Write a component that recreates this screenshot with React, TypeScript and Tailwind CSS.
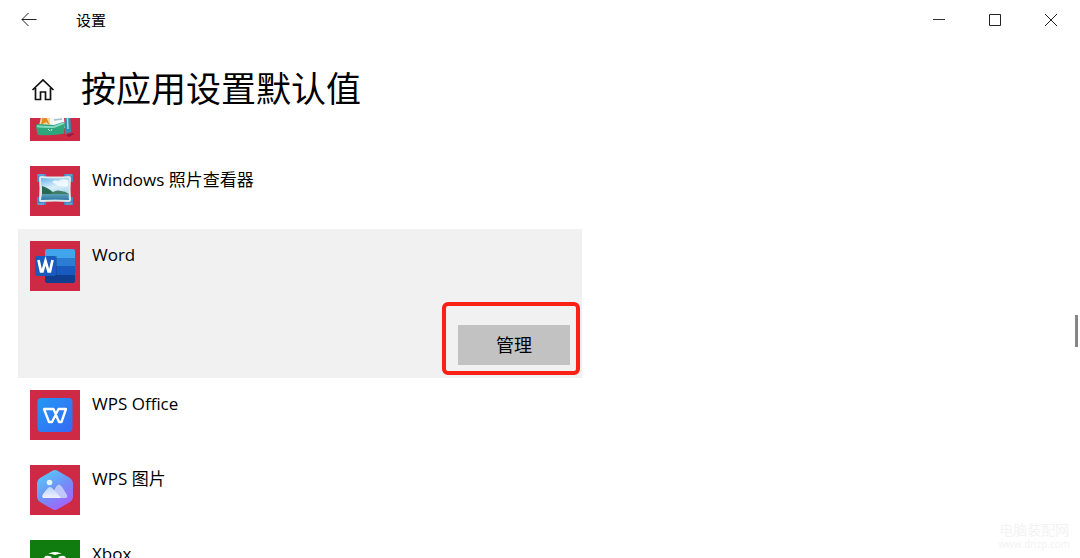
const apps = [
  { name: "", icon: <FaxIcon />, tile: "bg-[#cf2a45]", selected: false },
  { name: "Windows 照片查看器", icon: <PhotoViewerIcon />, tile: "bg-[#cf2a45]", selected: false },
  { name: "Word", icon: <WordIcon />, tile: "bg-[#cf2a45]", selected: true },
  { name: "WPS Office", icon: <WpsIcon />, tile: "bg-[#cf2a45]", selected: false },
  { name: "WPS 图片", icon: <WpsPhotoIcon />, tile: "bg-[#cf2a45]", selected: false },
  { name: "Xbox", icon: <XboxIcon />, tile: "bg-[#107c10]", selected: false },
];

function FaxIcon() {
  return (
    <svg className="w-full h-full" viewBox="0 0 50 50">
      <path d="M14 10l18-3 3 30H12z" fill="#e8f1f5" />
      <path d="M9 35l3-14 7 1 2 13z" fill="#f3d9a2" />
      <path d="M11 34l2-10h2l5 10-4-3z" fill="#e58a1f" />
      <path d="M20 20l14-2v20l-14-2z" fill="#f3f8fa" />
      <path d="M24 29l8-1" stroke="#a7bdc9" strokeWidth="1.5" />
      <path d="M35 16l5 1 1 24-6 2z" fill="#2e8fb0" />
      <path d="M37 18l1 20" stroke="#a8dce3" strokeWidth="1.5" />
      <path d="M36 44l7-2 1 1-5 3z" fill="#8f1f38" />
      <path d="M6 35q0-2 2-2l16 1 9-3q2 0 2 2l-1 9q0 1-2 1-12 2-23 1-2 0-2-3z" fill="#2fa57c" />
      <path d="M7 35q3 1 17 1l10-4" stroke="#83d9bd" strokeWidth="2" fill="none" />
      <path d="M18 38l2 2M22 38l-1 2" stroke="#b6eee0" strokeWidth="1" />
    </svg>
  );
}

function PhotoViewerIcon() {
  return (
    <svg className="w-full h-full" viewBox="0 0 50 50">
      <defs>
        <linearGradient id="sky" x1="0" y1="0" x2="0.3" y2="1">
          <stop offset="0" stopColor="#68b4ea" />
          <stop offset="0.5" stopColor="#d9effa" />
          <stop offset="1" stopColor="#a4cde4" />
        </linearGradient>
        <linearGradient id="lake" x1="0" y1="0" x2="0" y2="1">
          <stop offset="0" stopColor="#5f9fb5" />
          <stop offset="1" stopColor="#2c78a8" />
        </linearGradient>
      </defs>
      <path d="M7 8h9v8H7zM34 8h9v8h-9zM7 31h9v8H7zM34 31h9v8h-9z" fill="#4a88c2" />
      <path d="M8 9h6M36 9h6M8 38h6M36 38h6" stroke="#5e9ed2" strokeWidth="2" />
      <path d="M9 12q0-2 2-2 14 1 28 0 2 0 2 2-1 11 0 22 0 2-2 2-14-1-28 0-2 0-2-2 1-11 0-22z" fill="#dfe8ea" />
      <path d="M11 12q14 1 28 0-1 11 0 22-14-1-28 0 1-11 0-22z" fill="url(#sky)" />
      <path d="M22 16q3-3 6-1 4-3 10-1v6q-8 2-16-4z" fill="#f7fcff" opacity="0.8" />
      <path d="M12 28h27q-1 3 0 6-14-1-28 0z" fill="url(#lake)" />
      <path d="M12 20q7 2 13 8H12z" fill="#2a6951" />
      <path d="M20 28q6-5 11-3 4 0 8 3z" fill="#3f8068" />
    </svg>
  );
}

function WordIcon() {
  return (
    <svg className="w-full h-full" viewBox="0 0 50 50">
      <path d="M17 8h26q2 0 2 2v7H15v-7q0-2 2-2z" fill="#41a5ee" />
      <path d="M15 17h30v8H15z" fill="#2b7cd3" />
      <path d="M15 25h30v9H15z" fill="#185abd" />
      <path d="M15 34h30v6q0 2-2 2H17q-2 0-2-2z" fill="#103f91" />
      <path d="M15 15h12v20q0 2-2 2H15z" fill="#123d77" opacity="0.35" />
      <rect x="5" y="15" width="21" height="20" rx="2" fill="#185abd" />
      <path d="M8.500 19l2.500 11.500h1.500L15.500 20l3 10.500H20L22.500 19" stroke="#fff" strokeWidth="2.700" fill="none" />
    </svg>
  );
}

function WpsIcon() {
  return (
    <svg className="w-full h-full" viewBox="0 0 50 50">
      <defs>
        <linearGradient id="wps" x1="0" y1="0" x2="1" y2="1">
          <stop offset="0" stopColor="#2398f4" />
          <stop offset="1" stopColor="#3569f4" />
        </linearGradient>
      </defs>
      <rect x="7.500" y="8" width="35" height="34" rx="4" fill="url(#wps)" />
      <path
        d="M14 19h9.500l5.500 13h2.500L36 19h-7.500L22 32h-3z"
        stroke="#fff"
        strokeWidth="2.300"
        strokeLinejoin="round"
        fill="none"
      />
    </svg>
  );
}

function WpsPhotoIcon() {
  return (
    <svg className="w-full h-full" viewBox="0 0 50 50">
      <defs>
        <linearGradient id="hex" x1="0.2" y1="0" x2="0.8" y2="1">
          <stop offset="0" stopColor="#54cbfa" />
          <stop offset="0.5" stopColor="#718ff6" />
          <stop offset="1" stopColor="#ad5cff" />
        </linearGradient>
        <linearGradient id="hill" x1="0" y1="0" x2="0" y2="1">
          <stop offset="0" stopColor="#b9d5fb" />
          <stop offset="1" stopColor="#f0efff" />
        </linearGradient>
      </defs>
      <path d="M22 6q3-2 6 0l12 7q3 2 3 5v14q0 3-3 5l-12 7q-3 2-6 0l-12-7q-3-2-3-5V18q0-3 3-5z" fill="url(#hex)" />
      <circle cx="19.500" cy="17.500" r="2.800" fill="#e2f5ff" />
      <path d="M20 33l6-11q3-5 6 0l5 8q1 3-2 3z" fill="#c0c8fb" />
      <path d="M14 33q-3 0-1-4l4-5q3-4 6 0l8 9z" fill="url(#hill)" />
    </svg>
  );
}

function XboxIcon() {
  return (
    <svg className="w-full h-full" viewBox="0 0 50 50">
      <circle cx="25" cy="25" r="13" fill="#fff" />
      <path d="M16 14q4-1 9 1 5-2 9-1l1 2q-3-1-7 1 6 6 8 14l-3 3q-2-8-8-13-6 5-8 13l-3-3q2-8 8-14-4-2-7-1z" fill="#107c10" />
    </svg>
  );
}

function TitleBar() {
  return (
    <header className="flex h-10 shrink-0 items-center justify-between">
      <div className="flex items-center">
        <button type="button" aria-label="返回" className="flex h-10 w-14 items-center justify-center pl-0.5">
          <svg className="h-4 w-4" viewBox="0 0 16 16" fill="none" stroke="#222">
            <path d="M15.500 7.500H1M7.500 1L1 7.500 7.500 14" />
          </svg>
        </button>
        <span className="pl-5 text-[15px] leading-5">设置</span>
      </div>
      <div className="flex pr-px">
        <button type="button" aria-label="最小化" className="flex h-10 w-14 items-center justify-center">
          <svg className="h-3 w-3" viewBox="0 0 12 12" fill="none" stroke="#333">
            <path d="M0 5.500h12" />
          </svg>
        </button>
        <button type="button" aria-label="最大化" className="flex h-10 w-14 items-center justify-center">
          <svg className="h-3 w-3" viewBox="0 0 12 12" fill="none" stroke="#222">
            <path d="M.5.500h11v11H.5z" />
          </svg>
        </button>
        <button type="button" aria-label="关闭" className="flex h-10 w-14 items-center justify-center">
          <svg className="h-3 w-3" viewBox="0 0 12 12" fill="none" stroke="#222">
            <path d="M0 0l12 12M12 0L0 12" />
          </svg>
        </button>
      </div>
    </header>
  );
}

export default function App() {
  return (
    <div className="relative flex h-screen flex-col overflow-hidden bg-white font-['Open_Sans','Noto_Sans_CJK_SC',sans-serif] text-black">
      <TitleBar />
      <div className="flex h-[78px] shrink-0 items-center gap-[26px] pl-[31px] pt-5">
        <button type="button" aria-label="主页">
          <svg className="h-6 w-6" viewBox="0 0 24 24" fill="none" stroke="#111" strokeWidth="1.700">
            <path d="M1.500 13L12 3l10.500 10M4.500 11v11.500h5V15h5v7.500h5V11" />
          </svg>
        </button>
        <h1 className="text-[35px] leading-10">按应用设置默认值</h1>
      </div>
      <main className="min-h-0 flex-1 overflow-hidden">
        <ul className="-mt-[39px] ml-[18px] w-[564px]">
          {apps.map((app) => (
            <li key={app.name} className={app.selected ? "bg-[#f1f1f1]" : ""}>
              <div className="flex h-[75px] gap-3 pl-3 pt-3">
                <div className={`h-[50px] w-[50px] shrink-0 ${app.tile}`}>{app.icon}</div>
                <span className="text-[17px] leading-7">{app.name}</span>
              </div>
              {app.selected && (
                <div className="flex justify-end pb-[13px] pr-3 pt-[21px]">
                  <div className="relative">
                    <button type="button" className="block h-10 w-28 bg-[#c2c2c2] text-[18px] leading-10">
                      管理
                    </button>
                    <div className="pointer-events-none absolute -bottom-[10px] -left-4 -right-[10px] -top-[23px] rounded-md border-4 border-[#fb2015]" />
                  </div>
                </div>
              )}
            </li>
          ))}
        </ul>
      </main>
      <div className="absolute right-[2px] top-[315px] h-8 w-[3px] bg-[#868686]" />
      <div className="absolute bottom-2 right-[10px] text-center text-[#f3f3f3]">
        <p className="text-[14px] leading-4">电脑装配网</p>
        <p className="text-[10px] leading-3">www.dnzp.com</p>
      </div>
    </div>
  );
}
